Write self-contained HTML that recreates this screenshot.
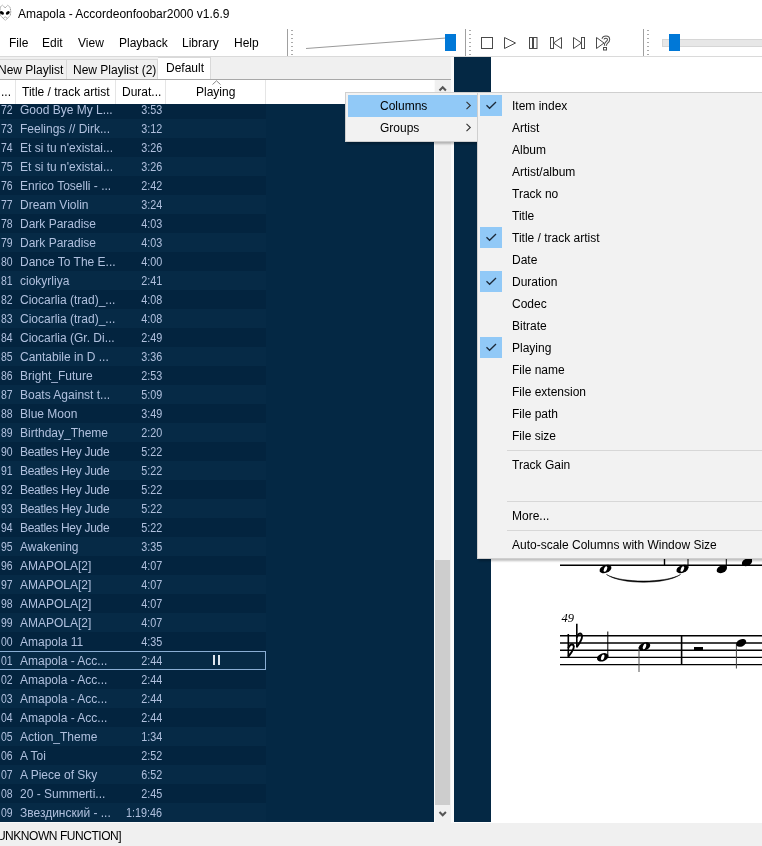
<!DOCTYPE html>
<html><head><meta charset="utf-8">
<style>
*{margin:0;padding:0;box-sizing:border-box}
html,body{width:762px;height:846px;overflow:hidden;background:#fff}
body{will-change:transform;position:relative;font-family:"Liberation Sans",sans-serif;font-size:12px;color:#000}
.abs{position:absolute}
.t{position:absolute;white-space:nowrap;line-height:14px}
#title{left:18px;top:7px}
.mb{position:absolute;top:36px;line-height:14px;white-space:nowrap}
#tbline{left:0;top:56px;width:762px;height:1px;background:#dadada}
.vsep{position:absolute;width:1px;background:#a0a0a0}
.grip{position:absolute;width:2px;background:repeating-linear-gradient(to bottom,#aaaaaa 0,#aaaaaa 1px,transparent 1px,transparent 4px)}
#tabs{left:0;top:57px;width:451px;height:23px;background:#f0f0f0}
#tabline{left:0;top:79px;width:451px;height:1px;background:#a8a8a8}
.tab{position:absolute;top:2px;height:21px;border-right:1px solid #d9d9d9;border-top:1px solid #d9d9d9}
.tab span{position:absolute;top:3px;line-height:14px;white-space:nowrap}
#hdr{left:0;top:80px;width:435px;height:24px;background:#fff}
.hs{position:absolute;top:0;width:1px;height:24px;background:#e5e5e5}
.ht{position:absolute;top:5px;line-height:14px;white-space:nowrap}
#list{left:0;top:104px;width:434px;height:718px;background:#042844;overflow:hidden}
.r{position:absolute;left:0;width:266px;height:19px;background:#03243f}
.r.alt{background:#062a46}
.r span{position:absolute;top:1px;line-height:19px;color:#b0c0de;white-space:nowrap}
.c1{left:1px;transform:scaleX(.87);transform-origin:0 0}
.c2{left:20px}
.c3{right:104px;transform:scaleX(.9);transform-origin:100% 0}
.focus{position:absolute;left:-1px;top:0;width:267px;height:19px;border:1px solid #8aaed4}
.pz i{position:absolute;top:4px;width:2px;height:10px;background:#dfe6ee}
.pz i:first-child{left:213px} .pz i:last-child{left:218px}
#sb{left:435px;top:80px;width:16px;height:743px;background:#f0f0f0}
#sbb{left:434px;top:80px;width:1px;height:743px;background:#fafafa}
#wl{left:0;top:822px;width:434px;height:1px;background:#fafafa}
#thumb{left:435px;top:560px;width:15px;height:245px;background:#cdcdcd}
#gap{left:451px;top:57px;width:3px;height:766px;background:#fafafa}
#strip{left:454px;top:57px;width:37px;height:765px;background:#042844}
#status{left:0;top:823px;width:762px;height:23px;background:#f0f0f0}
#stext{left:-6px;top:829px;letter-spacing:-0.45px}
.menu{position:absolute;background:#f2f2f2;border:1px solid #cfcfcf;box-shadow:2px 2px 2px rgba(0,0,0,0.25)}
.mi{position:absolute;left:2px;right:0;height:22px}
.mi span{position:absolute;left:32px;top:4px;line-height:14px;white-space:nowrap}
.chk{position:absolute;left:0;top:0;width:22px;height:21px;background:#91c9f7}
.sep{position:absolute;left:29px;right:0;height:1px;background:#d7d7d7}
</style></head><body>
<svg class="abs" style="left:0;top:0" width="14" height="24" viewBox="0 0 14 24">
<path d="M0.2 7.2 L2.3 5.2 L5.2 7.8 L7.8 5.2 L10.2 7.5 L10.8 12 L10.2 15.5 L5.4 20.4 L0.6 15.8 L0 12 Z" fill="#fff" stroke="#8a8a8a" stroke-width="0.9" stroke-dasharray="1.2 0.5"/>
<ellipse cx="1.9" cy="12.9" rx="2.2" ry="1.5" transform="rotate(40 1.9 12.9)" fill="#000"/>
<ellipse cx="7.8" cy="12.9" rx="2.2" ry="1.5" transform="rotate(-40 7.8 12.9)" fill="#000"/>
<path d="M3.5 18 L5.2 16.8 L7 18" fill="none" stroke="#999" stroke-width="0.8"/>
</svg>
<div class="t" id="title">Amapola - Accordeonfoobar2000 v1.6.9</div>
<div class="mb" style="left:9px">File</div>
<div class="mb" style="left:42px">Edit</div>
<div class="mb" style="left:78px">View</div>
<div class="mb" style="left:119px">Playback</div>
<div class="mb" style="left:182px">Library</div>
<div class="mb" style="left:234px">Help</div>
<div class="vsep" style="left:287px;top:29px;height:27px"></div>
<div class="grip" style="left:291px;top:30px;height:26px"></div>
<svg class="abs" style="left:300px;top:30px" width="160" height="26">
<line x1="6" y1="18.5" x2="146" y2="8" stroke="#9a9a9a" stroke-width="1"/>
<rect x="145" y="4" width="11" height="17" fill="#0078d7"/>
</svg>
<div class="vsep" style="left:465px;top:29px;height:27px"></div>
<div class="grip" style="left:469px;top:30px;height:26px"></div>
<svg class="abs" style="left:478px;top:34px" width="140" height="18" fill="none" stroke="#4a4a4a" stroke-width="1">
<rect x="3.5" y="3.5" width="11" height="11"/>
<path d="M26.5 3.5 L37.5 9 L26.5 14.5 Z"/>
<rect x="51.5" y="3.5" width="3" height="11"/><rect x="55.5" y="3.5" width="3.5" height="11"/>
<rect x="72.5" y="3.5" width="3" height="11"/><path d="M83.5 3.5 L75.5 9 L83.5 14.5 Z"/>
<rect x="103.5" y="3.5" width="3" height="11"/><path d="M95.5 3.5 L103.5 9 L95.5 14.5 Z"/>
<path d="M118.5 3.5 L126 9 L118.5 14.5 Z"/>
<path d="M125 5 Q125.6 3.2 128 3.2 Q130.6 3.2 130.6 5.5 Q130.6 7.2 128.8 8.4 Q127.4 9.4 127.4 11.8" stroke="#4a4a4a" stroke-width="3.2" stroke-linecap="butt"/>
<path d="M125 5 Q125.6 3.2 128 3.2 Q130.6 3.2 130.6 5.5 Q130.6 7.2 128.8 8.4 Q127.4 9.4 127.4 11.8" stroke="#fff" stroke-width="1.2" stroke-linecap="butt"/>
<rect x="125.5" y="13.5" width="3" height="2.5"/>
</svg>
<div class="vsep" style="left:643px;top:29px;height:27px"></div>
<div class="grip" style="left:647px;top:30px;height:26px"></div>
<div class="abs" style="left:662px;top:39px;width:100px;height:8px;background:#e7e7e7;border:1px solid #d6d6d6;border-right:none"></div>
<div class="abs" style="left:669px;top:34px;width:11px;height:17px;background:#0078d7"></div>
<div class="abs" id="tbline"></div>

<div class="abs" id="tabs">
 <div class="tab" style="left:-20px;width:87px"><span style="left:18px">New Playlist</span></div>
 <div class="tab" style="left:66px;width:92px"><span style="left:7px">New Playlist (2)</span></div>
 <div class="tab" style="left:158px;top:0;height:23px;width:53px;background:#fff"><span style="left:8px;top:3px">Default</span></div>
</div>
<div class="abs" id="tabline"></div>

<div class="abs" id="hdr">
 <span class="ht" style="left:1px">...</span>
 <div class="hs" style="left:15px"></div>
 <span class="ht" style="left:22px">Title / track artist</span>
 <div class="hs" style="left:115px"></div>
 <span class="ht" style="left:122px">Durat...</span>
 <div class="hs" style="left:165px"></div>
 <span class="ht" style="left:196px">Playing</span>
 <svg class="abs" style="left:211px;top:0" width="11" height="6"><path d="M1.5 4.5 L5.5 0.8 L9.5 4.5" fill="none" stroke="#888" stroke-width="1"/></svg>
 <div class="hs" style="left:265px"></div>
</div>

<div class="abs" id="list">
<div class="r" style="top:-4px"><span class="c1">72</span><span class="c2">Good Bye My L...</span><span class="c3">3:53</span></div>
<div class="r alt" style="top:15px"><span class="c1">73</span><span class="c2">Feelings // Dirk...</span><span class="c3">3:12</span></div>
<div class="r" style="top:34px"><span class="c1">74</span><span class="c2">Et si tu n&#x27;existai...</span><span class="c3">3:26</span></div>
<div class="r alt" style="top:53px"><span class="c1">75</span><span class="c2">Et si tu n&#x27;existai...</span><span class="c3">3:26</span></div>
<div class="r" style="top:72px"><span class="c1">76</span><span class="c2">Enrico Toselli - ...</span><span class="c3">2:42</span></div>
<div class="r alt" style="top:91px"><span class="c1">77</span><span class="c2">Dream Violin</span><span class="c3">3:24</span></div>
<div class="r" style="top:110px"><span class="c1">78</span><span class="c2">Dark Paradise</span><span class="c3">4:03</span></div>
<div class="r alt" style="top:129px"><span class="c1">79</span><span class="c2">Dark Paradise</span><span class="c3">4:03</span></div>
<div class="r" style="top:148px"><span class="c1">80</span><span class="c2">Dance To The E...</span><span class="c3">4:00</span></div>
<div class="r alt" style="top:167px"><span class="c1">81</span><span class="c2">ciokyrliya</span><span class="c3">2:41</span></div>
<div class="r" style="top:186px"><span class="c1">82</span><span class="c2">Ciocarlia (trad)_...</span><span class="c3">4:08</span></div>
<div class="r alt" style="top:205px"><span class="c1">83</span><span class="c2">Ciocarlia (trad)_...</span><span class="c3">4:08</span></div>
<div class="r" style="top:224px"><span class="c1">84</span><span class="c2">Ciocarlia (Gr. Di...</span><span class="c3">2:49</span></div>
<div class="r alt" style="top:243px"><span class="c1">85</span><span class="c2">Cantabile in D ...</span><span class="c3">3:36</span></div>
<div class="r" style="top:262px"><span class="c1">86</span><span class="c2">Bright_Future</span><span class="c3">2:53</span></div>
<div class="r alt" style="top:281px"><span class="c1">87</span><span class="c2">Boats Against t...</span><span class="c3">5:09</span></div>
<div class="r" style="top:300px"><span class="c1">88</span><span class="c2">Blue Moon</span><span class="c3">3:49</span></div>
<div class="r alt" style="top:319px"><span class="c1">89</span><span class="c2">Birthday_Theme</span><span class="c3">2:20</span></div>
<div class="r" style="top:338px"><span class="c1">90</span><span class="c2" style="letter-spacing:-0.3px">Beatles Hey Jude</span><span class="c3">5:22</span></div>
<div class="r alt" style="top:357px"><span class="c1">91</span><span class="c2" style="letter-spacing:-0.3px">Beatles Hey Jude</span><span class="c3">5:22</span></div>
<div class="r" style="top:376px"><span class="c1">92</span><span class="c2" style="letter-spacing:-0.3px">Beatles Hey Jude</span><span class="c3">5:22</span></div>
<div class="r alt" style="top:395px"><span class="c1">93</span><span class="c2" style="letter-spacing:-0.3px">Beatles Hey Jude</span><span class="c3">5:22</span></div>
<div class="r" style="top:414px"><span class="c1">94</span><span class="c2" style="letter-spacing:-0.3px">Beatles Hey Jude</span><span class="c3">5:22</span></div>
<div class="r alt" style="top:433px"><span class="c1">95</span><span class="c2">Awakening</span><span class="c3">3:35</span></div>
<div class="r" style="top:452px"><span class="c1">96</span><span class="c2">AMAPOLA[2]</span><span class="c3">4:07</span></div>
<div class="r alt" style="top:471px"><span class="c1">97</span><span class="c2">AMAPOLA[2]</span><span class="c3">4:07</span></div>
<div class="r" style="top:490px"><span class="c1">98</span><span class="c2">AMAPOLA[2]</span><span class="c3">4:07</span></div>
<div class="r alt" style="top:509px"><span class="c1">99</span><span class="c2">AMAPOLA[2]</span><span class="c3">4:07</span></div>
<div class="r" style="top:528px"><span class="c1">00</span><span class="c2">Amapola 11</span><span class="c3">4:35</span></div>
<div class="r alt" style="top:547px"><span class="c1">01</span><span class="c2">Amapola - Acc...</span><span class="c3">2:44</span><div class="focus"></div><div class="pz"><i></i><i></i></div></div>
<div class="r" style="top:566px"><span class="c1">02</span><span class="c2">Amapola - Acc...</span><span class="c3">2:44</span></div>
<div class="r alt" style="top:585px"><span class="c1">03</span><span class="c2">Amapola - Acc...</span><span class="c3">2:44</span></div>
<div class="r" style="top:604px"><span class="c1">04</span><span class="c2">Amapola - Acc...</span><span class="c3">2:44</span></div>
<div class="r alt" style="top:623px"><span class="c1">05</span><span class="c2">Action_Theme</span><span class="c3">1:34</span></div>
<div class="r" style="top:642px"><span class="c1">06</span><span class="c2">A Toi</span><span class="c3">2:52</span></div>
<div class="r alt" style="top:661px"><span class="c1">07</span><span class="c2">A Piece of Sky</span><span class="c3">6:52</span></div>
<div class="r" style="top:680px"><span class="c1">08</span><span class="c2">20 - Summerti...</span><span class="c3">2:45</span></div>
<div class="r alt" style="top:699px"><span class="c1">09</span><span class="c2">Звездинский - ...</span><span class="c3">1:19:46</span></div>
</div>

<div class="abs" id="sb"></div><div class="abs" id="sbb"></div><div class="abs" id="wl"></div>
<div class="abs" id="thumb"></div>
<svg class="abs" style="left:435px;top:80px" width="16" height="17"><path d="M4.5 10.5 L7.7 7.2 L10.9 10.5" fill="none" stroke="#555" stroke-width="2"/></svg>
<svg class="abs" style="left:435px;top:805px" width="16" height="17"><path d="M4.5 7 L7.7 10.3 L10.9 7" fill="none" stroke="#555" stroke-width="2"/></svg>
<div class="abs" id="gap"></div>
<div class="abs" id="strip"></div>

<svg class="abs" style="left:0;top:0" width="762" height="846">
<g stroke="#000" stroke-width="1.4">
<line x1="560" y1="565.2" x2="762" y2="565.2"/>
<line x1="560" y1="558" x2="762" y2="558"/>
<line x1="664.5" y1="556" x2="664.5" y2="565.5"/>
<line x1="560" y1="635.8" x2="762" y2="635.8"/>
<line x1="560" y1="643" x2="762" y2="643"/>
<line x1="560" y1="650.2" x2="762" y2="650.2"/>
<line x1="560" y1="657.4" x2="762" y2="657.4"/>
<line x1="560" y1="664.6" x2="762" y2="664.6"/>
<line x1="681.6" y1="635.8" x2="681.6" y2="664.6" stroke-width="1.6"/>
</g>
<g stroke="#000" stroke-width="1">
<line x1="688" y1="555" x2="688" y2="568"/>
<line x1="726.3" y1="555" x2="726.3" y2="568"/>
<line x1="751.5" y1="555" x2="751.5" y2="562"/>
<line x1="607.8" y1="631.5" x2="607.8" y2="657"/>
<line x1="639" y1="647" x2="639" y2="672" stroke="#555"/>
<line x1="736.4" y1="643" x2="736.4" y2="668.5" stroke="#444"/>
</g>
<g fill="#000">
<g transform="translate(605.5 569) rotate(-22)"><ellipse rx="6.2" ry="3.9"/><ellipse rx="3" ry="1.5" fill="#fff" transform="rotate(-45)"/></g>
<g transform="translate(682.4 569) rotate(-22)"><ellipse rx="6.2" ry="3.9"/><ellipse rx="3" ry="1.5" fill="#fff" transform="rotate(-45)"/></g>
<ellipse transform="translate(721.8 569.2) rotate(-25)" rx="5.4" ry="3.6"/>
<ellipse transform="translate(747 562.2) rotate(-25)" rx="5.4" ry="3.6"/>
<g transform="translate(602.7 657.3) rotate(-22)"><ellipse rx="6" ry="3.9"/><ellipse rx="2.9" ry="1.5" fill="#fff" transform="rotate(-45)"/></g>
<g transform="translate(644.5 646.5) rotate(-22)"><ellipse rx="6" ry="3.9"/><ellipse rx="2.9" ry="1.5" fill="#fff" transform="rotate(-45)"/></g>
<ellipse transform="translate(741.2 642.9) rotate(-25)" rx="5.3" ry="3.6"/>
<rect x="694" y="647" width="9" height="3.5"/>
</g>
<path d="M606.5 574.5 C621 584.8 666 584.8 680.5 574.5 C666 583.2 621 583.2 606.5 574.5 Z" fill="#000" stroke="#000" stroke-width="0.5"/>
<g fill="none" stroke="#000">
<path d="M568.3 634 V657" stroke-width="1.6"/>
<path d="M568.3 656.5 C572 652 575.2 647 573.3 645 C571.5 643.2 569.3 645.5 568.3 648" stroke-width="2"/>
<path d="M576.8 623.8 V647.5" stroke-width="1.6"/>
<path d="M576.8 647 C580.5 642 583.2 636.5 581.5 634.3 C579.8 632.3 577.6 634.5 576.8 637.5" stroke-width="2"/>
</g>
<text x="561.5" y="622.3" style="font-family:'Liberation Serif',serif;font-style:italic;font-size:12.5px" fill="#000">49</text>
</svg>

<div class="abs" id="status"></div>
<div class="t" id="stext">[UNKNOWN FUNCTION]</div>

<div class="menu" style="left:345px;top:92px;width:134px;height:50px">
 <div class="mi" style="top:2px;left:2px;right:1px;background:#91c9f7"><span style="left:32px">Columns</span></div>
 <div class="mi" style="top:24px;left:2px;right:1px"><span style="left:32px">Groups</span></div>
 <svg class="abs" style="left:119px;top:8px" width="8" height="9"><path d="M1.5 0.8 L5.3 4.5 L1.5 8.2" fill="none" stroke="#333" stroke-width="1.1"/></svg>
 <svg class="abs" style="left:119px;top:30px" width="8" height="9"><path d="M1.5 0.8 L5.3 4.5 L1.5 8.2" fill="none" stroke="#333" stroke-width="1.1"/></svg>
</div>
<div class="menu" style="left:477px;top:92px;width:300px;height:467px">
<div class="abs" style="left:0;top:2px;right:0;bottom:2px">
<div class="mi" style="top:0px"><div class="chk"><svg width="22" height="21" viewBox="0 0 22 21"><path d="M6.5 10.3 L9.6 13.3 L16 7" fill="none" stroke="#1c2a3a" stroke-width="1.3"/></svg></div><span>Item index</span></div>
<div class="mi" style="top:22px"><span>Artist</span></div>
<div class="mi" style="top:44px"><span>Album</span></div>
<div class="mi" style="top:66px"><span>Artist/album</span></div>
<div class="mi" style="top:88px"><span>Track no</span></div>
<div class="mi" style="top:110px"><span>Title</span></div>
<div class="mi" style="top:132px"><div class="chk"><svg width="22" height="21" viewBox="0 0 22 21"><path d="M6.5 10.3 L9.6 13.3 L16 7" fill="none" stroke="#1c2a3a" stroke-width="1.3"/></svg></div><span>Title / track artist</span></div>
<div class="mi" style="top:154px"><span>Date</span></div>
<div class="mi" style="top:176px"><div class="chk"><svg width="22" height="21" viewBox="0 0 22 21"><path d="M6.5 10.3 L9.6 13.3 L16 7" fill="none" stroke="#1c2a3a" stroke-width="1.3"/></svg></div><span>Duration</span></div>
<div class="mi" style="top:198px"><span>Codec</span></div>
<div class="mi" style="top:220px"><span>Bitrate</span></div>
<div class="mi" style="top:242px"><div class="chk"><svg width="22" height="21" viewBox="0 0 22 21"><path d="M6.5 10.3 L9.6 13.3 L16 7" fill="none" stroke="#1c2a3a" stroke-width="1.3"/></svg></div><span>Playing</span></div>
<div class="mi" style="top:264px"><span>File name</span></div>
<div class="mi" style="top:286px"><span>File extension</span></div>
<div class="mi" style="top:308px"><span>File path</span></div>
<div class="mi" style="top:330px"><span>File size</span></div>
<div class="sep" style="top:355px"></div>
<div class="mi" style="top:359px"><span>Track Gain</span></div>
<div class="sep" style="top:406px"></div>
<div class="mi" style="top:410px"><span>More...</span></div>
<div class="sep" style="top:435px"></div>
<div class="mi" style="top:439px"><span>Auto-scale Columns with Window Size</span></div>
</div>
</div>
</body></html>
